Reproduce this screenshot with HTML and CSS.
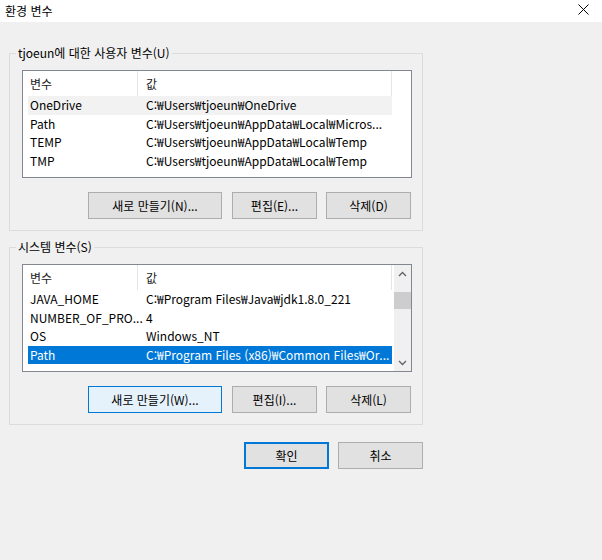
FILE: index.html
```html
<!DOCTYPE html>
<html lang="ko">
<head>
    <meta charset="UTF-8">
    <title>환경 변수</title>
    <link rel="stylesheet" href="styles.css">
</head>
<body>
    <div class="titlebar">
        <span class="title">환경 변수</span>
        <svg class="close" width="11" height="11" viewBox="0 0 11 11">
            <path d="M0.5 0.5 L10.5 10.5 M10.5 0.5 L0.5 10.5" stroke="#000" stroke-width="1" fill="none"/>
        </svg>
    </div>

    <div class="dialog">
        <!-- 사용자 변수 -->
        <fieldset class="group">
            <legend>tjoeun에 대한 사용자 변수(U)</legend>
            <div class="list">
                <div class="list-body">
                    <div class="list-head">
                        <span class="col-name">변수</span>
                        <span class="col-value">값</span>
                    </div>
                    <div class="row hot"><span class="col-name">OneDrive</span><span class="col-value">C:₩Users₩tjoeun₩OneDrive</span></div>
                    <div class="row"><span class="col-name">Path</span><span class="col-value">C:₩Users₩tjoeun₩AppData₩Local₩Micros...</span></div>
                    <div class="row"><span class="col-name">TEMP</span><span class="col-value">C:₩Users₩tjoeun₩AppData₩Local₩Temp</span></div>
                    <div class="row"><span class="col-name">TMP</span><span class="col-value">C:₩Users₩tjoeun₩AppData₩Local₩Temp</span></div>
                </div>
            </div>
            <div class="buttons">
                <button class="btn btn-wide">새로 만들기(N)...</button>
                <button class="btn">편집(E)...</button>
                <button class="btn">삭제(D)</button>
            </div>
        </fieldset>

        <!-- 시스템 변수 -->
        <fieldset class="group">
            <legend>시스템 변수(S)</legend>
            <div class="list">
                <div class="list-body">
                    <div class="list-head">
                        <span class="col-name">변수</span>
                        <span class="col-value">값</span>
                    </div>
                    <div class="row"><span class="col-name">JAVA_HOME</span><span class="col-value">C:₩Program Files₩Java₩jdk1.8.0_221</span></div>
                    <div class="row"><span class="col-name">NUMBER_OF_PRO...</span><span class="col-value">4</span></div>
                    <div class="row"><span class="col-name">OS</span><span class="col-value">Windows_NT</span></div>
                    <div class="row selected"><span class="col-name">Path</span><span class="col-value">C:₩Program Files (x86)₩Common Files₩Or...</span></div>
                </div>
                <div class="vscroll">
                    <div class="arrow">
                        <svg width="9" height="6" viewBox="0 0 9 6"><path d="M1 5 L4.5 1.5 L8 5" stroke="#606060" stroke-width="1.3" fill="none"/></svg>
                    </div>
                    <div class="track">
                        <div class="thumb"></div>
                    </div>
                    <div class="arrow">
                        <svg width="9" height="6" viewBox="0 0 9 6"><path d="M1 1 L4.5 4.5 L8 1" stroke="#606060" stroke-width="1.3" fill="none"/></svg>
                    </div>
                </div>
            </div>
            <div class="buttons">
                <button class="btn btn-wide focus">새로 만들기(W)...</button>
                <button class="btn">편집(I)...</button>
                <button class="btn">삭제(L)</button>
            </div>
        </fieldset>

        <div class="footer">
            <button class="btn default">확인</button>
            <button class="btn">취소</button>
        </div>
    </div>
</body>
</html>
```

FILE: styles.css
```css
* {
    margin: 0;
    padding: 0;
    box-sizing: border-box;
}

body {
    font-family: 'Noto Sans CJK KR', 'Noto Sans', sans-serif;
    font-size: 12px;
    color: #000;
    background: #f0f0f0;
    width: 602px;
    height: 560px;
    overflow: hidden;
}

.titlebar {
    height: 22px;
    background: #fff;
    display: flex;
    justify-content: space-between;
    align-items: flex-start;
    padding: 2px 13px 0 5px;
}

.title {
    font-size: 12px;
    line-height: 17px;
}

.close {
    margin-top: 2px;
}

.dialog {
    padding: 23px 0 0 9px;
    width: 423px;
}

.group {
    border: 1px solid #dcdcdc;
    padding: 9px 10px 11px 12px;
    margin-bottom: 8px;
}

.group legend {
    margin-left: -6px;
    padding: 0 2px;
    line-height: 16px;
    height: 16px;
}

.list {
    width: 390px;
    height: 108px;
    background: #fff;
    border: 1px solid #828790;
    display: flex;
    justify-content: space-between;
}

.list-body {
    padding-left: 5px;
    width: 369px;
}

.list-head,
.row {
    display: grid;
    grid-template-columns: 110px 254px;
    width: 364px;
}

.list-head {
    height: 25px;
    align-items: center;
    color: #222;
}

.list-head span {
    height: 100%;
    display: flex;
    align-items: center;
    border-right: 1px solid #e5e5e5;
}

.row {
    height: 18.5px;
    line-height: 18.5px;
    white-space: nowrap;
}

.col-name {
    padding-left: 2px;
}

.col-value {
    padding-left: 8px;
    overflow: hidden;
}

.row.hot {
    background: #f2f2f2;
}

.row.selected {
    background: #0078d7;
    color: #fff;
}

.vscroll {
    width: 17px;
    background: #f0f0f0;
    display: flex;
    flex-direction: column;
}

.arrow {
    height: 17px;
    display: flex;
    align-items: center;
    justify-content: center;
}

.track {
    flex: 1;
    padding-top: 10px;
}

.thumb {
    height: 17px;
    background: #cdcdcd;
}

.buttons {
    display: flex;
    justify-content: flex-end;
    gap: 9px;
    margin-top: 14px;
    padding-right: 1px;
}

.btn {
    font-family: inherit;
    font-size: 12px;
    color: #000;
    width: 85px;
    height: 27px;
    background: #e1e1e1;
    border: 1px solid #adadad;
}

.btn-wide {
    width: 134px;
    margin-right: 1px;
}

.btn.focus {
    background: #e5f1fb;
    border-color: #0078d7;
}

.btn.default {
    border: 2px solid #0078d7;
}

.footer {
    display: flex;
    justify-content: flex-end;
    gap: 9px;
    margin-top: 17px;
    height: 27px;
}
```
